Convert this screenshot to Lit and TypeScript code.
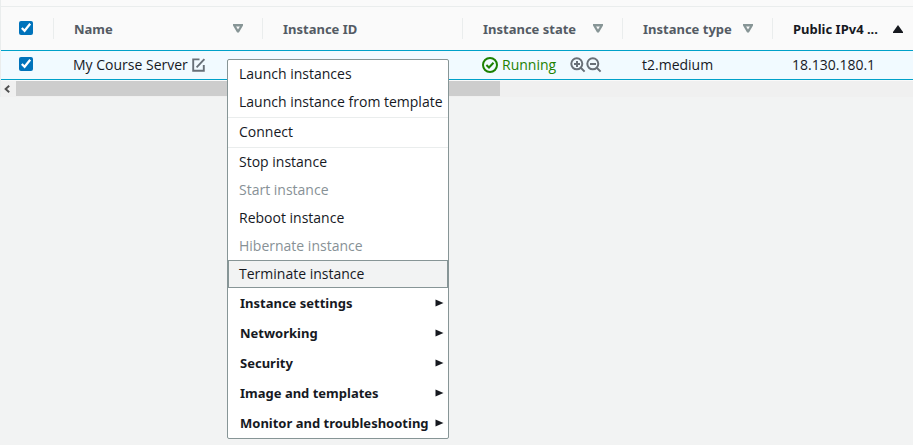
import { LitElement, html, css, svg, nothing } from "lit";
import { customElement, state } from "lit/decorators.js";

interface MenuEntry {
  label: string;
  disabled?: boolean;
  active?: boolean;
}

const ACTION_GROUPS: MenuEntry[][] = [
  [{ label: "Launch instances" }, { label: "Launch instance from template" }],
  [{ label: "Connect" }],
  [
    { label: "Stop instance" },
    { label: "Start instance", disabled: true },
    { label: "Reboot instance" },
    { label: "Hibernate instance", disabled: true },
    { label: "Terminate instance", active: true },
  ],
];

const SUBMENUS = [
  "Instance settings",
  "Networking",
  "Security",
  "Image and templates",
  "Monitor and troubleshooting",
];

const magnifier = (plus: boolean) => html`
  <svg width="16" height="16" viewBox="0 0 16 16" fill="none" stroke="#687078" stroke-width="2" aria-hidden="true">
    <circle cx="6.8" cy="6.8" r="5.5" />
    <path d="M10.8 10.8L14.6 14.6M4 7h6" />
    ${plus ? svg`<path d="M7 4v6" />` : nothing}
  </svg>
`;

@customElement("context-menu")
export class ContextMenu extends LitElement {
  static styles = css`
    :host {
      display: block;
      box-sizing: border-box;
      width: 222px;
      background: #fff;
      border: 1px solid #879596;
      border-radius: 2px;
      font: 14px/22px "Open Sans", "Noto Sans", sans-serif;
    }
    .group {
      padding-bottom: 1px;
      border-bottom: 1px solid #eaeded;
    }
    .group.last {
      padding-bottom: 0;
      border-bottom: 0;
    }
    .item,
    .submenu {
      display: flex;
      align-items: center;
      box-sizing: border-box;
      width: 100%;
      height: 28px;
      margin: 0;
      padding: 0 10px;
      border: 1px solid transparent;
      background: none;
      color: #16191f;
      font: inherit;
      text-align: left;
      white-space: nowrap;
    }
    .item:disabled {
      color: #879196;
    }
    .item.active {
      background: #f2f3f3;
      border-color: #879596;
    }
    .submenu {
      justify-content: space-between;
      height: 30px;
      padding: 0 3px 0 11px;
      font-family: "Noto Sans", "Open Sans", sans-serif;
      font-size: 13px;
      font-weight: 700;
    }
  `;

  render() {
    return html`
      <div role="menu" aria-label="Instance actions">
        ${ACTION_GROUPS.map(
          (group, i) => html`
            <div class="group ${i === ACTION_GROUPS.length - 1 ? "last" : ""}">
              ${group.map(
                (entry) => html`<button
                  class="item ${entry.active ? "active" : ""}"
                  role="menuitem"
                  ?disabled=${entry.disabled}
                >${entry.label}</button>`
              )}
            </div>
          `
        )}
        ${SUBMENUS.map(
          (label) => html`<button class="submenu" role="menuitem" aria-haspopup="menu">
            <span>${label}</span>
            <svg width="9" height="8" viewBox="0 0 9 8" aria-hidden="true"><path d="M0.5 0.6L8.5 4L0.5 7.4z" fill="#16191f" /></svg>
          </button>`
        )}
      </div>
    `;
  }
}

@customElement("app-root")
export class AppRoot extends LitElement {
  static styles = css`
    :host {
      display: block;
      position: relative;
      box-sizing: border-box;
      min-height: 100vh;
      overflow: hidden;
      background: #f2f3f3;
      color: #16191f;
      font: 14px/22px "Open Sans", "Noto Sans", sans-serif;
    }
    .panel {
      padding-top: 6px;
      background: #fafafa;
      border-left: 1px solid #eaeded;
    }
    .table {
      width: 100%;
      table-layout: fixed;
      border-collapse: separate;
      border-spacing: 0;
      border-top: 1px solid #eaeded;
    }
    .c-check { width: 52px; }
    .c-name { width: 209px; }
    .c-id { width: 200px; }
    .c-state { width: 160px; }
    .c-type { width: 150px; }
    th {
      box-sizing: border-box;
      height: 43px;
      padding: 0;
      color: #545b64;
      font-family: "Noto Sans", "Open Sans", sans-serif;
      font-size: 13px;
      font-weight: 700;
      text-align: left;
    }
    td {
      box-sizing: border-box;
      height: 30px;
      padding: 0 0 0 20px;
      background: #f1faff;
      border-top: 1px solid #00a1c9;
      border-bottom: 1px solid #00a1c9;
      white-space: nowrap;
    }
    .pick {
      padding: 0 0 0 18px;
    }
    .check {
      display: block;
      width: 14px;
      height: 14px;
      margin: 0 0 2px;
      accent-color: #0073bb;
    }
    .head {
      display: flex;
      align-items: center;
      justify-content: space-between;
      box-sizing: border-box;
      height: 21px;
      padding: 0 19px 0 20px;
      border-left: 1px solid #eaeded;
    }
    .sort {
      display: flex;
      padding: 0;
      border: 0;
      background: none;
    }
    .head.sorted {
      padding-right: 10px;
      color: #16191f;
    }
    .cell {
      display: flex;
      align-items: center;
    }
    .edit {
      display: flex;
      margin-left: 4px;
      padding: 0;
      border: 0;
      background: none;
    }
    .running {
      margin-left: 4px;
      color: #1d8102;
    }
    .zoom {
      display: flex;
      margin-left: 14px;
    }
    .zoom button {
      display: flex;
      padding: 0;
      border: 0;
      background: none;
    }
    .scroll {
      display: flex;
      height: 16px;
      border-top: 1px solid #fafafa;
      background: #f0f0f0;
    }
    .arrow {
      display: flex;
      align-items: center;
      justify-content: center;
      width: 15px;
      padding: 0 4px 0 0;
      border: 0;
      background: none;
    }
    .track {
      flex: 1;
    }
    .thumb {
      width: 54%;
      height: 15px;
      background: #cdcdcd;
    }
    .menu {
      position: absolute;
      left: 227px;
      top: 59px;
    }
  `;

  @state() private selected = true;

  private toggle(e: Event) {
    this.selected = (e.target as HTMLInputElement).checked;
  }

  private sortButton(label: string) {
    return html`<button class="sort" aria-label="Sort by ${label}">
      <svg width="10" height="9" viewBox="0 0 10 9" aria-hidden="true">
        <path d="M0 0H10V1.6L5.9 8.4H4.1L0 1.6zM3.1 2.4L5 5.4L6.9 2.4z" fill="#879596" fill-rule="evenodd" />
      </svg>
    </button>`;
  }

  render() {
    return html`
      <div class="panel">
        <table class="table">
          <colgroup>
            <col class="c-check" /><col class="c-name" /><col class="c-id" />
            <col class="c-state" /><col class="c-type" /><col />
          </colgroup>
          <thead>
            <tr>
              <th class="pick">
                <input class="check" type="checkbox" aria-label="Select all instances" .checked=${this.selected} @change=${this.toggle} />
              </th>
              <th><div class="head"><span>Name</span>${this.sortButton("name")}</div></th>
              <th><div class="head"><span>Instance ID</span></div></th>
              <th><div class="head"><span>Instance state</span>${this.sortButton("instance state")}</div></th>
              <th><div class="head"><span>Instance type</span>${this.sortButton("instance type")}</div></th>
              <th>
                <div class="head sorted">
                  <span>Public IPv4 ...</span>
                  <button class="sort" aria-label="Sort by public IPv4">
                    <svg width="10" height="8" viewBox="0 0 10 8" aria-hidden="true"><path d="M5 0L10 7V8H0V7z" fill="#16191f" /></svg>
                  </button>
                </div>
              </th>
            </tr>
          </thead>
          <tbody>
            <tr>
              <td class="pick">
                <input class="check" type="checkbox" aria-label="Select My Course Server" .checked=${this.selected} @change=${this.toggle} />
              </td>
              <td>
                <div class="cell">
                  <span>My Course Server</span>
                  <button class="edit" aria-label="Edit name">
                    <svg width="14" height="14" viewBox="0 0 14 14" fill="none" stroke="#687078" stroke-width="1.9" aria-hidden="true">
                      <path d="M7.5 1.4H1.2V12.8H11.8V7" />
                      <path d="M4.6 9.4L12.4 1.2" />
                    </svg>
                  </button>
                </div>
              </td>
              <td></td>
              <td>
                <div class="cell">
                  <svg width="16" height="16" viewBox="0 0 16 16" fill="none" stroke="#1d8102" stroke-width="2" aria-hidden="true">
                    <circle cx="8" cy="8" r="7" />
                    <path d="M4.4 8L7 10.5L11.5 5.8" />
                  </svg>
                  <span class="running">Running</span>
                  <span class="zoom">
                    <button aria-label="Include in filter">${magnifier(true)}</button>
                    <button aria-label="Exclude from filter">${magnifier(false)}</button>
                  </span>
                </div>
              </td>
              <td>t2.medium</td>
              <td>18.130.180.1</td>
            </tr>
          </tbody>
        </table>
        <div class="scroll">
          <button class="arrow" aria-label="Scroll left">
            <svg width="6" height="8" viewBox="0 0 6 8" fill="none" stroke="#505050" stroke-width="1.9" aria-hidden="true"><path d="M5.2 0.7L1.6 4L5.2 7.3" /></svg>
          </button>
          <div class="track"><div class="thumb"></div></div>
        </div>
      </div>
      <context-menu class="menu"></context-menu>
    `;
  }
}
